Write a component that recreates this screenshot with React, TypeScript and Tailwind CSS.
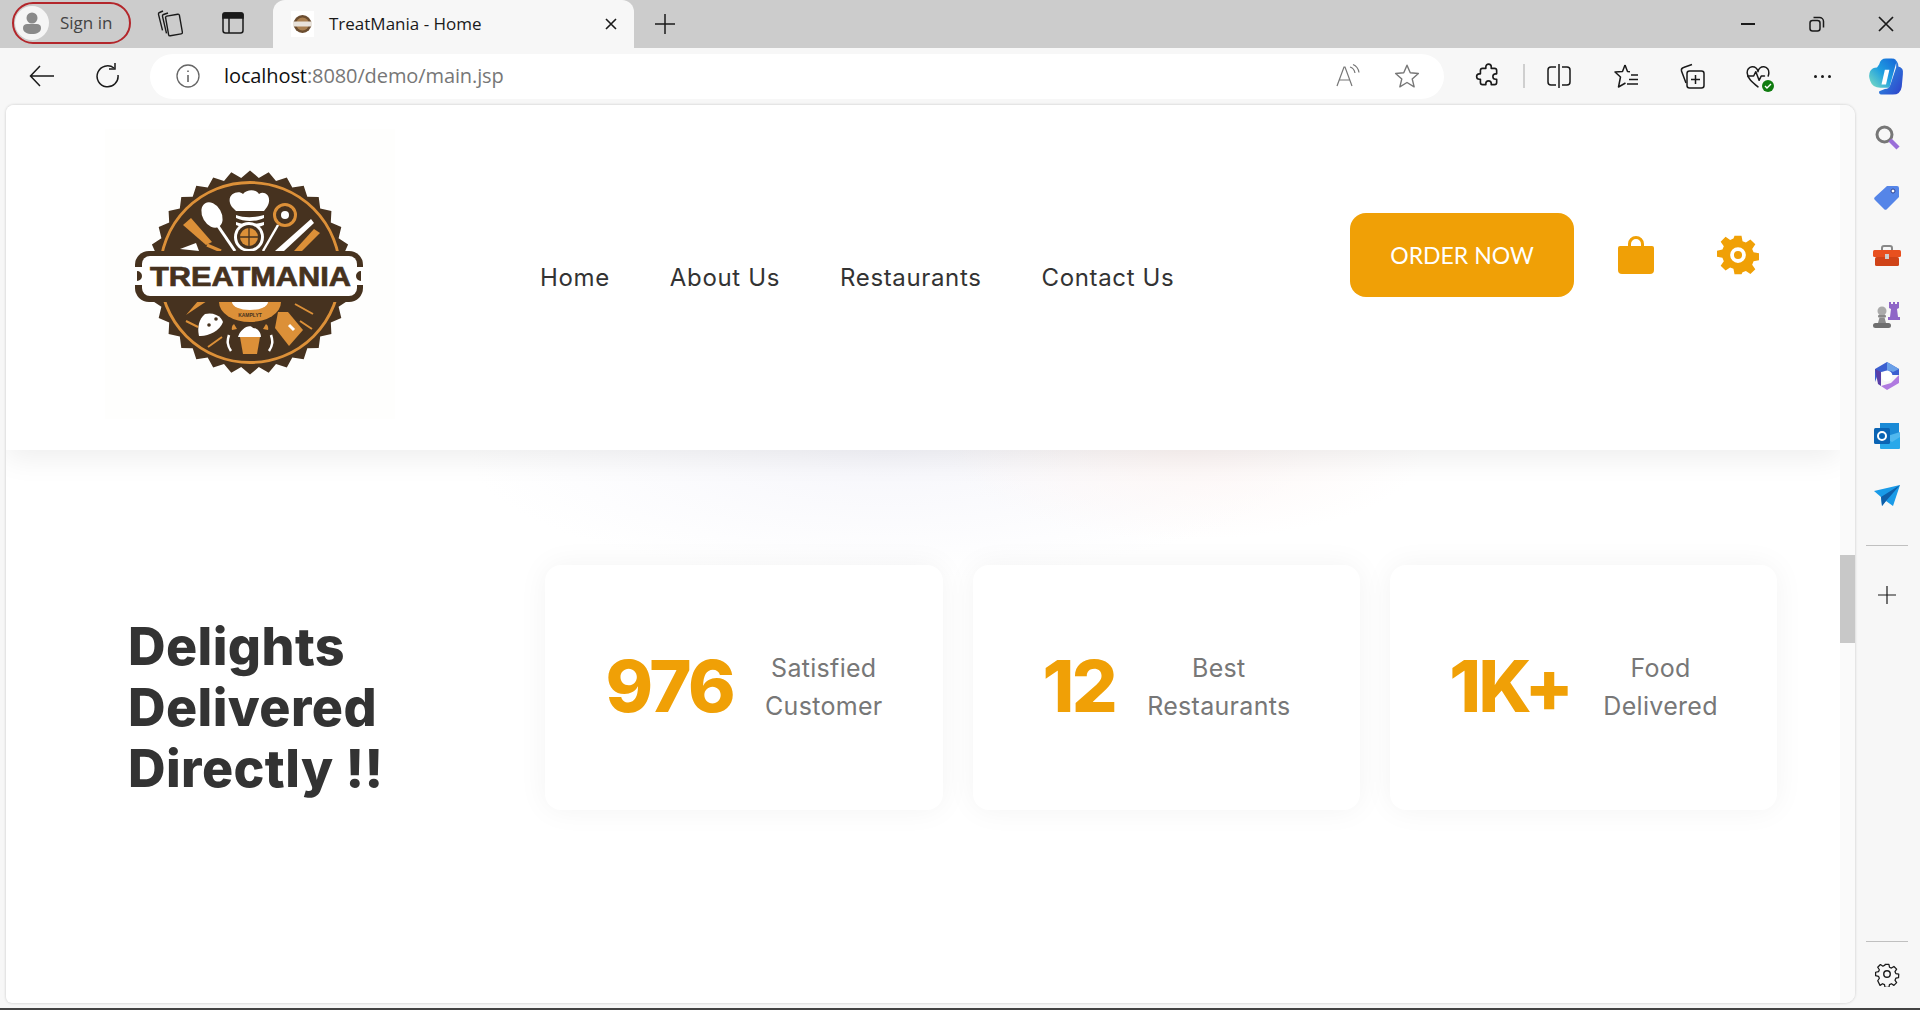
import React, { FC, ReactNode } from 'react';

const Ico: FC<{ size?: number; children: ReactNode; sw?: number; color?: string }> = ({
  size = 24,
  children,
  sw = 1.5,
  color = '#1a1a1a',
}) => (
  <svg width={size} height={size} viewBox="0 0 24 24" fill="none" stroke={color} strokeWidth={sw} strokeLinecap="round" strokeLinejoin="round">
    {children}
  </svg>
);

// sawtooth outline of the badge
const teeth = (() => {
  const pts: string[] = [];
  const n = 34;
  for (let i = 0; i < n * 2; i++) {
    const r = i % 2 === 0 ? 102 : 95;
    const a = (i * Math.PI) / n;
    pts.push(`${(250 + r * Math.sin(a)).toFixed(1)},${(273.5 - r * Math.cos(a)).toFixed(1)}`);
  }
  return pts.join(' ');
})();

const Logo: FC = () => (
  <svg width="290" height="290" viewBox="105 130 290 290">
    <rect x="105" y="130" width="290" height="290" fill="#fefefd" />
    <polygon points={teeth} fill="#46321f" />
    <circle cx="250" cy="273.5" r="90" fill="none" stroke="#dc9038" strokeWidth="2.8" />
    {/* top half */}
    <path d="M232 208c-8-12 6-18 11-13 4-5 13-5 16 0 6-4 14 3 8 13l-3 4h-28z" fill="#fff" />
    <path d="M236 216c8 3 18 3 28 0v3c-8 4-20 4-28 0z" fill="#fff" />
    <path d="M236 223c8 3 18 3 28 0v3c-8 4-20 4-28 0z" fill="#fff" />
    <circle cx="249" cy="238" r="15" fill="#fff" />
    <circle cx="249" cy="238" r="12" fill="#46321f" />
    <circle cx="249" cy="238" r="9" fill="#dc9038" />
    <path d="M249 229v18M240 238h18" stroke="#46321f" strokeWidth="1.3" />
    <ellipse cx="212" cy="216" rx="9.500" ry="13.500" fill="#fff" transform="rotate(-30 212 216)" />
    <path d="M218 227l17 25" stroke="#fff" strokeWidth="3" />
    <path d="M183 226l8-7 21 24-6 3z" fill="#dc9038" />
    <path d="M207 246l14 6" stroke="#dc9038" strokeWidth="3" />
    <path d="M180 250l16-6 3 8z" fill="#fff" />
    <circle cx="285" cy="216" r="10.500" fill="#46321f" stroke="#dc9038" strokeWidth="3" />
    <circle cx="285" cy="216" r="4" fill="#fff" />
    <path d="M278 226l-15 26" stroke="#fff" strokeWidth="2.500" />
    <path d="M311 220l-36 32 9 0 30-28z" fill="#fff" />
    <path d="M320 234l-18 18h-8l20-22z" fill="#dc9038" />
    {/* bottom half */}
    <path d="M219 303a31 20 0 0 0 62 0z" fill="#dc9038" />
    <path d="M232 303a18 8 0 0 0 36 0z" fill="#fff" />
    <text x="250" y="318" textAnchor="middle" fontFamily="'Liberation Sans', sans-serif" fontSize="5" fontWeight="700" fill="#46321f">KAMPLYT</text>
    <path d="M186 316l21-14h-9z" fill="#dc9038" />
    <path d="M205 315a14 11 0 0 1 18 8c-3 9-16 15-24 14-2-9 0-17 6-22z" fill="#fff" />
    <circle cx="209" cy="326" r="1.800" fill="#46321f" />
    <circle cx="216" cy="320" r="1.800" fill="#46321f" />
    <path d="M240 338h20l-3 17h-14z" fill="#dc9038" />
    <path d="M238 338c2-8 12-14 15-9 4 0 8 4 8 9z" fill="#fff" />
    <path d="M234 325q-3 2-2 6l5-1zM266 325q3 2 2 6l-5-1z" fill="#dc9038" />
    <path d="M278 313l10 0 15 18-14 16-14-18z" fill="#dc9038" />
    <path d="M289 326l5 5" stroke="#fff" strokeWidth="3" />
    <path d="M295 305l18 10M300 322l12 8M222 338l-14 10M186 322l12 6" stroke="#dc9038" strokeWidth="2" />
    <path d="M231 352c-4-6-4-10-2-16M269 352c4-6 4-10 2-16" stroke="#fff" strokeWidth="2.500" fill="none" />
    {/* banner */}
    <rect x="135" y="252" width="228" height="51" rx="14" fill="#46321f" />
    <rect x="142" y="257" width="215" height="40" rx="8" fill="#fff" />
    <rect x="130" y="268" width="16" height="18" fill="#fff" />
    <rect x="353" y="268" width="16" height="18" fill="#fff" />
    <path d="M137 272a5 5 0 0 1 0 10zM361 272a5 5 0 0 0 0 10z" fill="#46321f" />
    <text x="150" y="287" textLength="201" lengthAdjust="spacingAndGlyphs" fontFamily="'Liberation Sans', sans-serif" fontWeight="700" fontSize="27" fill="#46321f" stroke="#46321f" strokeWidth="0.7">
      TREATMANIA
    </text>
  </svg>
);

const TitleBar: FC = () => (
  <div className="flex h-12 items-end bg-[#cccccc]">
    <div className="mb-[3px] ml-3 flex h-[42px] w-[119px] items-center gap-[12px] self-center rounded-full border-2 border-[#b3262b] pl-[1px]">
      <div className="flex h-[34px] w-[34px] items-center justify-center rounded-full bg-[#f5f5f5]">
        <svg width="20" height="24" viewBox="0 0 20 24" fill="#8a8a8a">
          <circle cx="10" cy="7" r="5.500" />
          <path d="M1 17c0-3 2-4 4-4h10c2 0 4 1 4 4 0 4-4 6-9 6s-9-2-9-6z" />
        </svg>
      </div>
      <span className="ml-[-1px] font-['Open_Sans',sans-serif] text-[17px] text-[#444]">Sign in</span>
    </div>
    <div className="mb-[3px] ml-[26px] self-center">
      <svg width="26" height="30" viewBox="0 0 26 30" fill="none" stroke="#1a1a1a" strokeWidth="1.400" strokeLinejoin="round">
        <rect x="10" y="7" width="14" height="20" rx="1.500" transform="rotate(-10 17 17)" />
        <path d="M11 5L6.500 6.500a1.500 1.500 0 0 0-1 1.800l4 17" />
        <path d="M6 3L2.500 4.500a1.500 1.500 0 0 0-1 1.800l4 16" />
      </svg>
    </div>
    <div className="mb-[3px] ml-[39px] self-center">
      <svg width="22" height="22" viewBox="0 0 22 22" fill="none" stroke="#1a1a1a" strokeWidth="1.500">
        <rect x="1" y="1" width="20" height="20" rx="2.500" />
        <path d="M1 2.500A1.500 1.500 0 0 1 2.500 1h17A1.500 1.500 0 0 1 21 2.500V6H1z" fill="#1a1a1a" />
        <path d="M7 6v15" />
      </svg>
    </div>
    <div className="ml-[29px] flex h-[48px] w-[361px] items-center rounded-t-[12px] bg-[#f7f7f7] pl-[18px]">
      <svg width="23" height="26" viewBox="0 0 23 26" className="shrink-0">
        <rect width="23" height="26" fill="#fff" />
        <circle cx="11.500" cy="13" r="9" fill="#6b4d30" />
        <circle cx="11.500" cy="13" r="6.500" fill="#a97f50" />
        <rect x="2" y="10.500" width="19" height="5" fill="#e8e2da" />
      </svg>
      <span className="ml-[15px] font-['Open_Sans',sans-serif] text-[17px] text-[#1a1a1a]">TreatMania - Home</span>
      <svg width="14" height="14" viewBox="0 0 14 14" className="ml-auto mr-[16px]" stroke="#1a1a1a" strokeWidth="1.600">
        <path d="M2 2l10 10M12 2L2 12" />
      </svg>
    </div>
    <svg width="22" height="22" viewBox="0 0 22 22" className="mb-[13px] ml-[20px]" stroke="#1a1a1a" strokeWidth="1.500">
      <path d="M11 1v20M1 11h20" />
    </svg>
    <div className="mb-[14px] ml-auto flex items-center">
      <svg width="16" height="20" viewBox="0 0 16 20" stroke="#1a1a1a" strokeWidth="2"><path d="M1 10h14" /></svg>
      <svg width="18" height="18" viewBox="0 0 18 18" className="ml-[52px]" fill="none" stroke="#1a1a1a" strokeWidth="1.500">
        <rect x="2" y="5.500" width="10" height="10.500" rx="2.500" />
        <path d="M5.500 2.500h6a4 4 0 0 1 4 4v6" />
      </svg>
      <svg width="18" height="18" viewBox="0 0 18 18" className="ml-[51px] mr-[25px]" stroke="#1a1a1a" strokeWidth="1.700">
        <path d="M2 2l14 14M16 2L2 16" />
      </svg>
    </div>
  </div>
);

const Toolbar: FC = () => (
  <div className="flex h-[56px] items-center bg-[#f7f7f7]">
    <svg width="26" height="24" viewBox="0 0 26 24" className="ml-[29px]" fill="none" stroke="#1a1a1a" strokeWidth="1.500">
      <path d="M25 12H2M11 2L1.500 12 11 22" />
    </svg>
    <svg width="24" height="26" viewBox="0 0 24 26" className="ml-[41px]" fill="none" stroke="#1a1a1a" strokeWidth="1.500">
      <path d="M18 5A10.500 10.500 0 1 0 22 12" />
      <path d="M19 0v6h-6" />
    </svg>
    <div className="ml-[30px] flex h-[45px] w-[1294px] items-center rounded-full bg-white pl-[26px] pr-[20px]">
      <svg width="24" height="24" viewBox="0 0 24 24" fill="none" stroke="#666" strokeWidth="1.300">
        <circle cx="12" cy="12" r="11" />
        <path d="M12 11v7M12 6.500v1.500" strokeWidth="1.600" />
      </svg>
      <span className="ml-[24px] font-['Open_Sans',sans-serif] text-[20px] tracking-[-0.1px] text-[#777]">
        <span className="text-[#111]">localhost</span>:8080/demo/main.jsp
      </span>
      <svg width="26" height="26" viewBox="0 0 26 26" className="ml-auto" fill="none" stroke="#777" strokeWidth="1.200">
        <path d="M2 23L9 4h1l7 19M4.500 17h10" />
        <path d="M15 4q4 1 5 6M18 1.500q5 2 6 8" />
      </svg>
      <svg width="26" height="26" viewBox="0 0 24 24" className="ml-[33px] mr-[4px]" fill="none" stroke="#777" strokeWidth="1.300" strokeLinejoin="round">
        <path d="M12 2l3 7 7.500 .7-5.700 5 1.800 7.300L12 18l-6.600 4 1.800-7.300-5.700-5L9 9z" />
      </svg>
    </div>
    <div className="ml-[31px]">
      <Ico size={26}>
        <path d="M10 3.500a2.500 2.500 0 0 1 5 0V5h3a2 2 0 0 1 2 2v3h-1a2.500 2.500 0 0 0 0 5h1v3a2 2 0 0 1-2 2h-3v-1a2.500 2.500 0 0 0-5 0v1H7a2 2 0 0 1-2-2v-3H4a2.500 2.500 0 0 1 0-5h1V7a2 2 0 0 1 2-2h3z" />
      </Ico>
    </div>
    <div className="ml-[22px] h-[24px] w-[2px] bg-[#cfcfcf]" />
    <div className="ml-[21px]">
      <svg width="26" height="26" viewBox="0 0 26 26" fill="none" stroke="#1a1a1a" strokeWidth="1.500">
        <path d="M13 1v24" />
        <path d="M10 4H5a3 3 0 0 0-3 3v12a3 3 0 0 0 3 3h5M16 4h5a3 3 0 0 1 3 3v12a3 3 0 0 1-3 3h-5" />
      </svg>
    </div>
    <div className="ml-[41px]">
      <svg width="26" height="26" viewBox="0 0 26 26" fill="none" stroke="#1a1a1a" strokeWidth="1.500" strokeLinejoin="round">
        <path d="M12 2l2.500 6.500 2.500.2M12 2L9.500 8.500 2 9l5.500 5L5.500 24l7-4" />
        <path d="M18 12h7M16 16.500h9M14 21h11" />
      </svg>
    </div>
    <div className="ml-[40px]">
      <svg width="26" height="28" viewBox="0 0 26 28" fill="none" stroke="#1a1a1a" strokeWidth="1.500">
        <path d="M7 21L2.500 9a3 3 0 0 1 2-3.500L13 2.500" />
        <rect x="8" y="9" width="17" height="17" rx="2.500" />
        <path d="M16.500 13v9M12 17.500h9" />
      </svg>
    </div>
    <div className="relative ml-[40px]">
      <Ico size={26} sw={1.400}>
        <path d="M12 22C7 18 2 14 2 9a5 5 0 0 1 10-1 5 5 0 0 1 10 1c0 1-.2 2-.6 3" />
        <path d="M2.500 12H8l2-4 3 8 2-4h3" />
      </Ico>
      <div className="absolute bottom-[-3px] right-[-3px] flex h-[12px] w-[12px] items-center justify-center rounded-full bg-[#107c10]">
        <svg width="8" height="8" viewBox="0 0 8 8" fill="none" stroke="#fff" strokeWidth="1.400"><path d="M1 4l2 2 4-4" /></svg>
      </div>
    </div>
    <div className="ml-[43px] flex gap-[4px]">
      <div className="h-[3px] w-[3px] rounded-full bg-[#1a1a1a]" />
      <div className="h-[3px] w-[3px] rounded-full bg-[#1a1a1a]" />
      <div className="h-[3px] w-[3px] rounded-full bg-[#1a1a1a]" />
    </div>
    <div className="ml-[37px]">
      <svg width="36" height="39" viewBox="0 0 32 34">
        <defs>
          <linearGradient id="copA" x1="0" y1="1" x2="1" y2="0">
            <stop offset="0" stopColor="#7fe0c0" />
            <stop offset="0.500" stopColor="#1f9fe0" />
            <stop offset="1" stopColor="#1665d8" />
          </linearGradient>
          <linearGradient id="copB" x1="0" y1="0" x2="1" y2="1">
            <stop offset="0" stopColor="#2aa5e8" />
            <stop offset="1" stopColor="#2f3fc9" />
          </linearGradient>
        </defs>
        <path d="M10 6q1-5 6-5h5q5 0 4 4L19 27H11q-7 0-9-6Q0 16 2 12q2-3 6-3z" fill="url(#copA)" />
        <path d="M22 1q5 2 5 7 5 1 4 7l-1 11q-1 7-8 7h-9q-4 0-3-3l5-2q4 0 5-4l5-15q1-6-3-8z" fill="url(#copB)" />
        <path d="M15 11h4l-3 13h-4z" fill="#fff" />
      </svg>
    </div>
  </div>
);

const stats = [
  { value: '976', top: 'Satisfied', bottom: 'Customer', width: 'w-[398px]' },
  { value: '12', top: 'Best', bottom: 'Restaurants', width: 'w-[387px]' },
  { value: '1K+', top: 'Food', bottom: 'Delivered', width: 'w-[387px]' },
];

const Page: FC = () => (
  <div className="relative ml-[6px] flex h-[898px] flex-1 overflow-hidden rounded-tl-[8px] rounded-tr-[10px] rounded-br-[10px] rounded-bl-[6px] bg-white shadow-[0_0_3px_rgba(0,0,0,0.2)]">
    <div className="flex flex-1 flex-col bg-[radial-gradient(ellipse_240px_90px_at_1180px_345px,#fdf6f5,transparent),radial-gradient(ellipse_420px_130px_at_880px_345px,#f6f6fb,transparent)]">
      <header className="flex h-[345px] items-center bg-white pl-[99px] shadow-[0_8px_28px_rgba(0,0,0,0.07)]">
        <div className="mt-[-8px]"><Logo /></div>
        <nav className="ml-[145px] flex gap-[60px] font-['Inter',sans-serif] text-[24px] text-[#333] tracking-[0.65px]">
          <span>Home</span>
          <span>About Us</span>
          <span>Restaurants</span>
          <span>Contact Us</span>
        </nav>
        <div className="mb-[45px] ml-auto mr-[81px] flex items-center">
          <button className="h-[84px] w-[224px] rounded-[16px] bg-[#f0a006] font-['Lato',sans-serif] text-[23px] text-white">
            ORDER NOW
          </button>
          <svg width="38" height="40" viewBox="0 0 38 40" className="ml-[43px]" fill="#f0a006">
            <path d="M11 12V9a8 8 0 0 1 16 0v3h-3V9a5 5 0 0 0-10 0v3z" />
            <path d="M3 11h32a2 2 0 0 1 2 2v22a4 4 0 0 1-4 4H5a4 4 0 0 1-4-4V13a2 2 0 0 1 2-2z" />
          </svg>
          <svg width="42" height="42" viewBox="0 0 24 24" className="ml-[62px]" fill="#f0a006">
            <path fillRule="evenodd" d="M10 1h4l.6 3.100 1.900.8 2.600-1.800 2.800 2.800-1.800 2.600.8 1.900 3.100.6v4l-3.100.6-.8 1.900 1.800 2.600-2.800 2.800-2.600-1.800-1.900.8L14 23h-4l-.6-3.100-1.900-.8-2.600 1.800-2.800-2.800 1.800-2.600-.8-1.900L0 13V9.500l3.100-.6.8-1.900L2.100 4.400l2.800-2.800 2.600 1.800 1.900-.8zM12 7.500a4.500 4.500 0 1 0 0 9 4.500 4.500 0 0 0 0-9zm0 2.200a2.300 2.300 0 1 1 0 4.600 2.300 2.300 0 0 1 0-4.600z" />
          </svg>
        </div>
      </header>
      <section className="mt-[115px] flex items-start pl-[122px]">
        <h1 className="mt-[51px] w-[417px] font-['Inter',sans-serif] text-[52px] leading-[61px] font-extrabold tracking-[0.4px] text-[#333]">
          Delights
          <br />
          Delivered
          <br />
          Directly !!
        </h1>
        <div className="flex gap-[30px]">
          {stats.map((s) => (
            <div
              key={s.value}
              className={`${s.width} flex h-[245px] items-center justify-center gap-[32px] rounded-[16px] bg-white shadow-[0_0_30px_rgba(0,0,0,0.05)]`}
            >
              <span className="mt-[-4px] font-['Inter',sans-serif] text-[72px] font-extrabold tracking-[-2.500px] text-[#f0a006]">
                {s.value}
              </span>
              <span className="mt-[-2px] text-center font-['Inter',sans-serif] text-[25px] leading-[38px] tracking-[0.3px] text-[#777]">
                {s.top}
                <br />
                {s.bottom}
              </span>
            </div>
          ))}
        </div>
      </section>
    </div>
    {/* scrollbar */}
    <div className="w-[15px] shrink-0 bg-[#fafafa] pt-[450px]">
      <div className="h-[88px] bg-[#c8c8c8]" />
    </div>
  </div>
);

const Rail: FC = () => (
  <div className="flex h-[898px] w-[65px] shrink-0 flex-col items-center pt-[19px] pr-[2px]">
    <svg width="26" height="26" viewBox="0 0 26 26" fill="none">
      <circle cx="10.500" cy="10.500" r="7.500" stroke="#777" strokeWidth="3" />
      <path d="M16 16l8 8" stroke="#9a6fd8" strokeWidth="4.500" />
    </svg>
    <svg width="26" height="26" viewBox="0 0 26 26" className="mt-[34px]">
      <path d="M13 2h10a2 2 0 0 1 2 2v9L13 25a2 2 0 0 1-3 0L1 16a2 2 0 0 1 0-3z" fill="#5585e8" />
      <circle cx="19" cy="7" r="2" fill="#fff" stroke="#2b3f90" />
    </svg>
    <svg width="28" height="22" viewBox="0 0 28 22" className="mt-[35px]">
      <path d="M9 6V3a2 2 0 0 1 2-2h6a2 2 0 0 1 2 2v3" fill="none" stroke="#888" strokeWidth="2" />
      <rect x="0" y="5" width="28" height="7" rx="1.500" fill="#e8501f" />
      <rect x="2" y="12" width="24" height="9" rx="1.500" fill="#cf4318" />
      <rect x="12" y="9" width="4" height="5" fill="#ccc" />
    </svg>
    <svg width="28" height="28" viewBox="0 0 28 28" className="mt-[34px]">
      <path d="M16 1h2v2h2V1h2v2h2V1h2v6l-2 1 1 8h2v3H15v-3h2l1-8-2-1z" fill="#8f66c7" />
      <circle cx="9" cy="10" r="4.500" fill="#aaa" />
      <rect x="5" y="14" width="8" height="2.500" rx="1" fill="#888" />
      <path d="M6.500 16.500h5L13 22H5z" fill="#8c8c8c" />
      <rect x="0" y="22" width="18" height="5" rx="2.500" fill="#6f6f6f" />
    </svg>
    <svg width="26" height="28" viewBox="0 0 26 28" className="mt-[33px]">
      <path d="M13 0l12 7v6H15a6 6 0 0 0-8-3L4 12 1 20V7z" fill="#3b5fd0" />
      <path d="M1 7l3 15 3 2V10z" fill="#5a3fa8" />
      <path d="M25 7v14L13 28l-6-4 10-3 8-8z" fill="#b07ae0" />
      <path d="M13 0l12 7-6 3a8 8 0 0 0-6-1z" fill="#6aa0e8" />
      <circle cx="13" cy="14" r="5.500" fill="#fff" />
    </svg>
    <svg width="26" height="26" viewBox="0 0 26 26" className="mt-[33px]">
      <rect x="6" y="0" width="19" height="13" fill="#1a8ad6" />
      <rect x="6" y="13" width="20" height="13" rx="1" fill="#28a8ea" />
      <path d="M10 14l16-5v5l-8 5z" fill="#50b8ef" />
      <rect x="0" y="5" width="16" height="16" rx="1.500" fill="#0a64b4" />
      <circle cx="8" cy="13" r="4" fill="none" stroke="#fff" strokeWidth="2" />
    </svg>
    <svg width="26" height="22" viewBox="0 0 26 22" className="mt-[36px]">
      <path d="M0 6l26-6-7 21-7-5-4 5-1-9z" fill="#1a9be8" />
      <path d="M26 0L7 12l1 9 4-5z" fill="#0f5ea8" />
    </svg>
    <div className="mt-[38px] h-px w-[42px] bg-[#c0c0c0]" />
    <svg width="20" height="20" viewBox="0 0 20 20" className="mt-[39px]" stroke="#1a1a1a" strokeWidth="1.200">
      <path d="M10 1v18M1 10h18" />
    </svg>
    <div className="mt-auto h-px w-[42px] bg-[#c0c0c0]" />
    <div className="mb-[16px] mt-[19px]">
      <Ico size={26} sw={1.300}>
        <circle cx="12" cy="12" r="3" />
        <path d="M10 2h4l.6 3 2 .9 2.600-1.700 2.800 2.800-1.700 2.600.9 2 3 .6-.2 3.600-2.800.6-.9 2 1.700 2.600-2.800 2.800-2.600-1.700-2 .9-.6 3h-4l-.6-3-2-.9-2.600 1.700L2.400 19l1.700-2.600-.9-2-3-.6v-3.600l3-.6.9-2L2.400 5l2.800-2.800 2.600 1.700 2-.9z" transform="translate(1.300 1.300) scale(.89)" />
      </Ico>
    </div>
  </div>
);

export default function App() {
  return (
    <div className="flex h-[1010px] w-[1920px] flex-col overflow-hidden bg-[#f7f7f7]">
      <TitleBar />
      <Toolbar />
      <div className="mt-[1px] flex">
        <Page />
        <Rail />
      </div>
      <div className="mt-auto h-[2px] bg-[#444]" />
    </div>
  );
}
